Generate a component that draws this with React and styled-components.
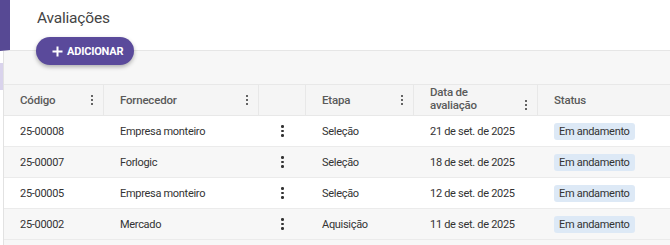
import styled, { createGlobalStyle } from "styled-components"

const GlobalStyle = createGlobalStyle`
    body{
        margin: 0;
        font-family: Roboto, "Liberation Sans", sans-serif;
        background: #ffffff;
        color: #333;
    }
`

const rows = [
    { code: "25-00008", supplier: "Empresa monteiro", stage: "Seleção", date: "21 de set. de 2025", status: "Em andamento" },
    { code: "25-00007", supplier: "Forlogic", stage: "Seleção", date: "18 de set. de 2025", status: "Em andamento" },
    { code: "25-00005", supplier: "Empresa monteiro", stage: "Seleção", date: "12 de set. de 2025", status: "Em andamento" },
    { code: "25-00002", supplier: "Mercado", stage: "Aquisição", date: "11 de set. de 2025", status: "Em andamento" },
]

function Kebab({ big }){
    return(
        <KebabIcon big={big}>
            <span></span><span></span><span></span>
        </KebabIcon>
    )
}

export default function App(){
    return(
        <>
            <GlobalStyle />
            <Page>
                <Header>
                    <Title>Avaliações</Title>
                    <AddButton>
                        <svg width="11" height="11" viewBox="0 0 11 11">
                            <path d="M5.5 0.5v10M0.5 5.5h10" stroke="#fff" strokeWidth="2" />
                        </svg>
                        ADICIONAR
                    </AddButton>
                </Header>
                <Body>
                    <Rail><span></span></Rail>
                    <Panel>
                        <Table>
                            <HeadRow>
                                <HeadCell>Código<Kebab /></HeadCell>
                                <HeadCell>Fornecedor<Kebab /></HeadCell>
                                <HeadCell></HeadCell>
                                <HeadCell>Etapa<Kebab /></HeadCell>
                                <HeadCell bottom>Data de<br />avaliação<Kebab /></HeadCell>
                                <HeadCell last>Status</HeadCell>
                            </HeadRow>
                            {rows.map((row, index)=>(
                                <Row key={row.code} striped={index % 2 === 1}>
                                    <Cell>{row.code}</Cell>
                                    <Cell>{row.supplier}</Cell>
                                    <Cell center><Kebab big /></Cell>
                                    <Cell>{row.stage}</Cell>
                                    <Cell>{row.date}</Cell>
                                    <Cell><Chip>{row.status}</Chip></Cell>
                                </Row>
                            ))}
                        </Table>
                    </Panel>
                </Body>
            </Page>
        </>
    )
}

const Page = styled.div`
    width: 670px;
    height: 245px;
    overflow: hidden;
    background: #f7f7f7;
`

const Header = styled.div`
    height: 51px;
    box-sizing: border-box;
    background: #ffffff;
    border-left: 10px solid #574994;
    border-bottom: 1px solid #e6e6e6;
    padding: 8px 0 0 27px;
    position: relative;
    z-index: 1;
`

const Title = styled.h1`
    margin: 0;
    font-size: 15.5px;
    font-weight: 400;
    letter-spacing: -0.2px;
    color: #444;
    line-height: 20px;
`

const AddButton = styled.button`
    margin: 9px 0 0 -1px;
    height: 28px;
    padding: 0 11px 0 16px;
    display: flex;
    align-items: center;
    gap: 4px;
    border: none;
    border-radius: 14px;
    background: #5a4a9b;
    color: #ffffff;
    font-family: Roboto, "Liberation Sans", sans-serif;
    font-size: 11px;
    font-weight: 700;
    letter-spacing: -0.2px;
    box-shadow: 0 2px 4px rgba(0,0,0,0.3);
`

const Body = styled.div`
    display: flex;
    height: 194px;
`

const Rail = styled.div`
    width: 3px;
    background: #ffffff;
    span{
        display: block;
        margin-top: 12px;
        height: 27px;
        background: #d9d3ec;
    }
`

const Panel = styled.div`
    flex: 1;
    border-left: 1px solid #e2e2e2;
    padding-top: 33px;
`

const Table = styled.div`
    display: flex;
    flex-direction: column;
`

const columns = "100px 155px 47px 108px 124px 1fr"

const HeadRow = styled.div`
    display: grid;
    grid-template-columns: ${columns};
    height: 32px;
    box-sizing: border-box;
    border-top: 1px solid #e8e8e8;
    border-bottom: 1px solid #e8e8e8;
    background: #f5f5f5;
`

const HeadCell = styled.div`
    display: flex;
    align-items: center;
    justify-content: space-between;
    padding: 0 10px 0 16px;
    font-size: 11.5px;
    font-weight: 500;
    letter-spacing: -0.2px;
    color: #5a5a5a;
    line-height: 13px;
    border-right: ${p => p.last ? "none" : "1px solid #e8e8e8"};
    position: relative;
    ${p => p.bottom && `
        display: block;
        padding-top: 1px;
        & > span{
            position: absolute;
            right: 10px;
            bottom: 5px;
        }
    `}
`

const Row = styled.div`
    display: grid;
    grid-template-columns: ${columns};
    height: 31px;
    box-sizing: border-box;
    border-bottom: 1px solid #ebebeb;
    background: ${p => p.striped ? "#f7f7f7" : "#ffffff"};
`

const Cell = styled.div`
    display: flex;
    align-items: center;
    justify-content: ${p => p.center ? "center" : "flex-start"};
    padding: ${p => p.center ? "0" : "0 0 0 16px"};
    font-size: 11px;
    letter-spacing: -0.3px;
    color: #333;
`

const Chip = styled.span`
    display: inline-block;
    background: #dde9f6;
    border-radius: 3px;
    padding: 2px 5px;
    line-height: 13px;
    color: #333;
`

const KebabIcon = styled.span`
    display: flex;
    flex-direction: column;
    gap: ${p => p.big ? "2px" : "1.5px"};
    span{
        width: ${p => p.big ? "2.5px" : "2.5px"};
        height: ${p => p.big ? "2.5px" : "2.5px"};
        border-radius: 50%;
        background: #333;
    }
`
